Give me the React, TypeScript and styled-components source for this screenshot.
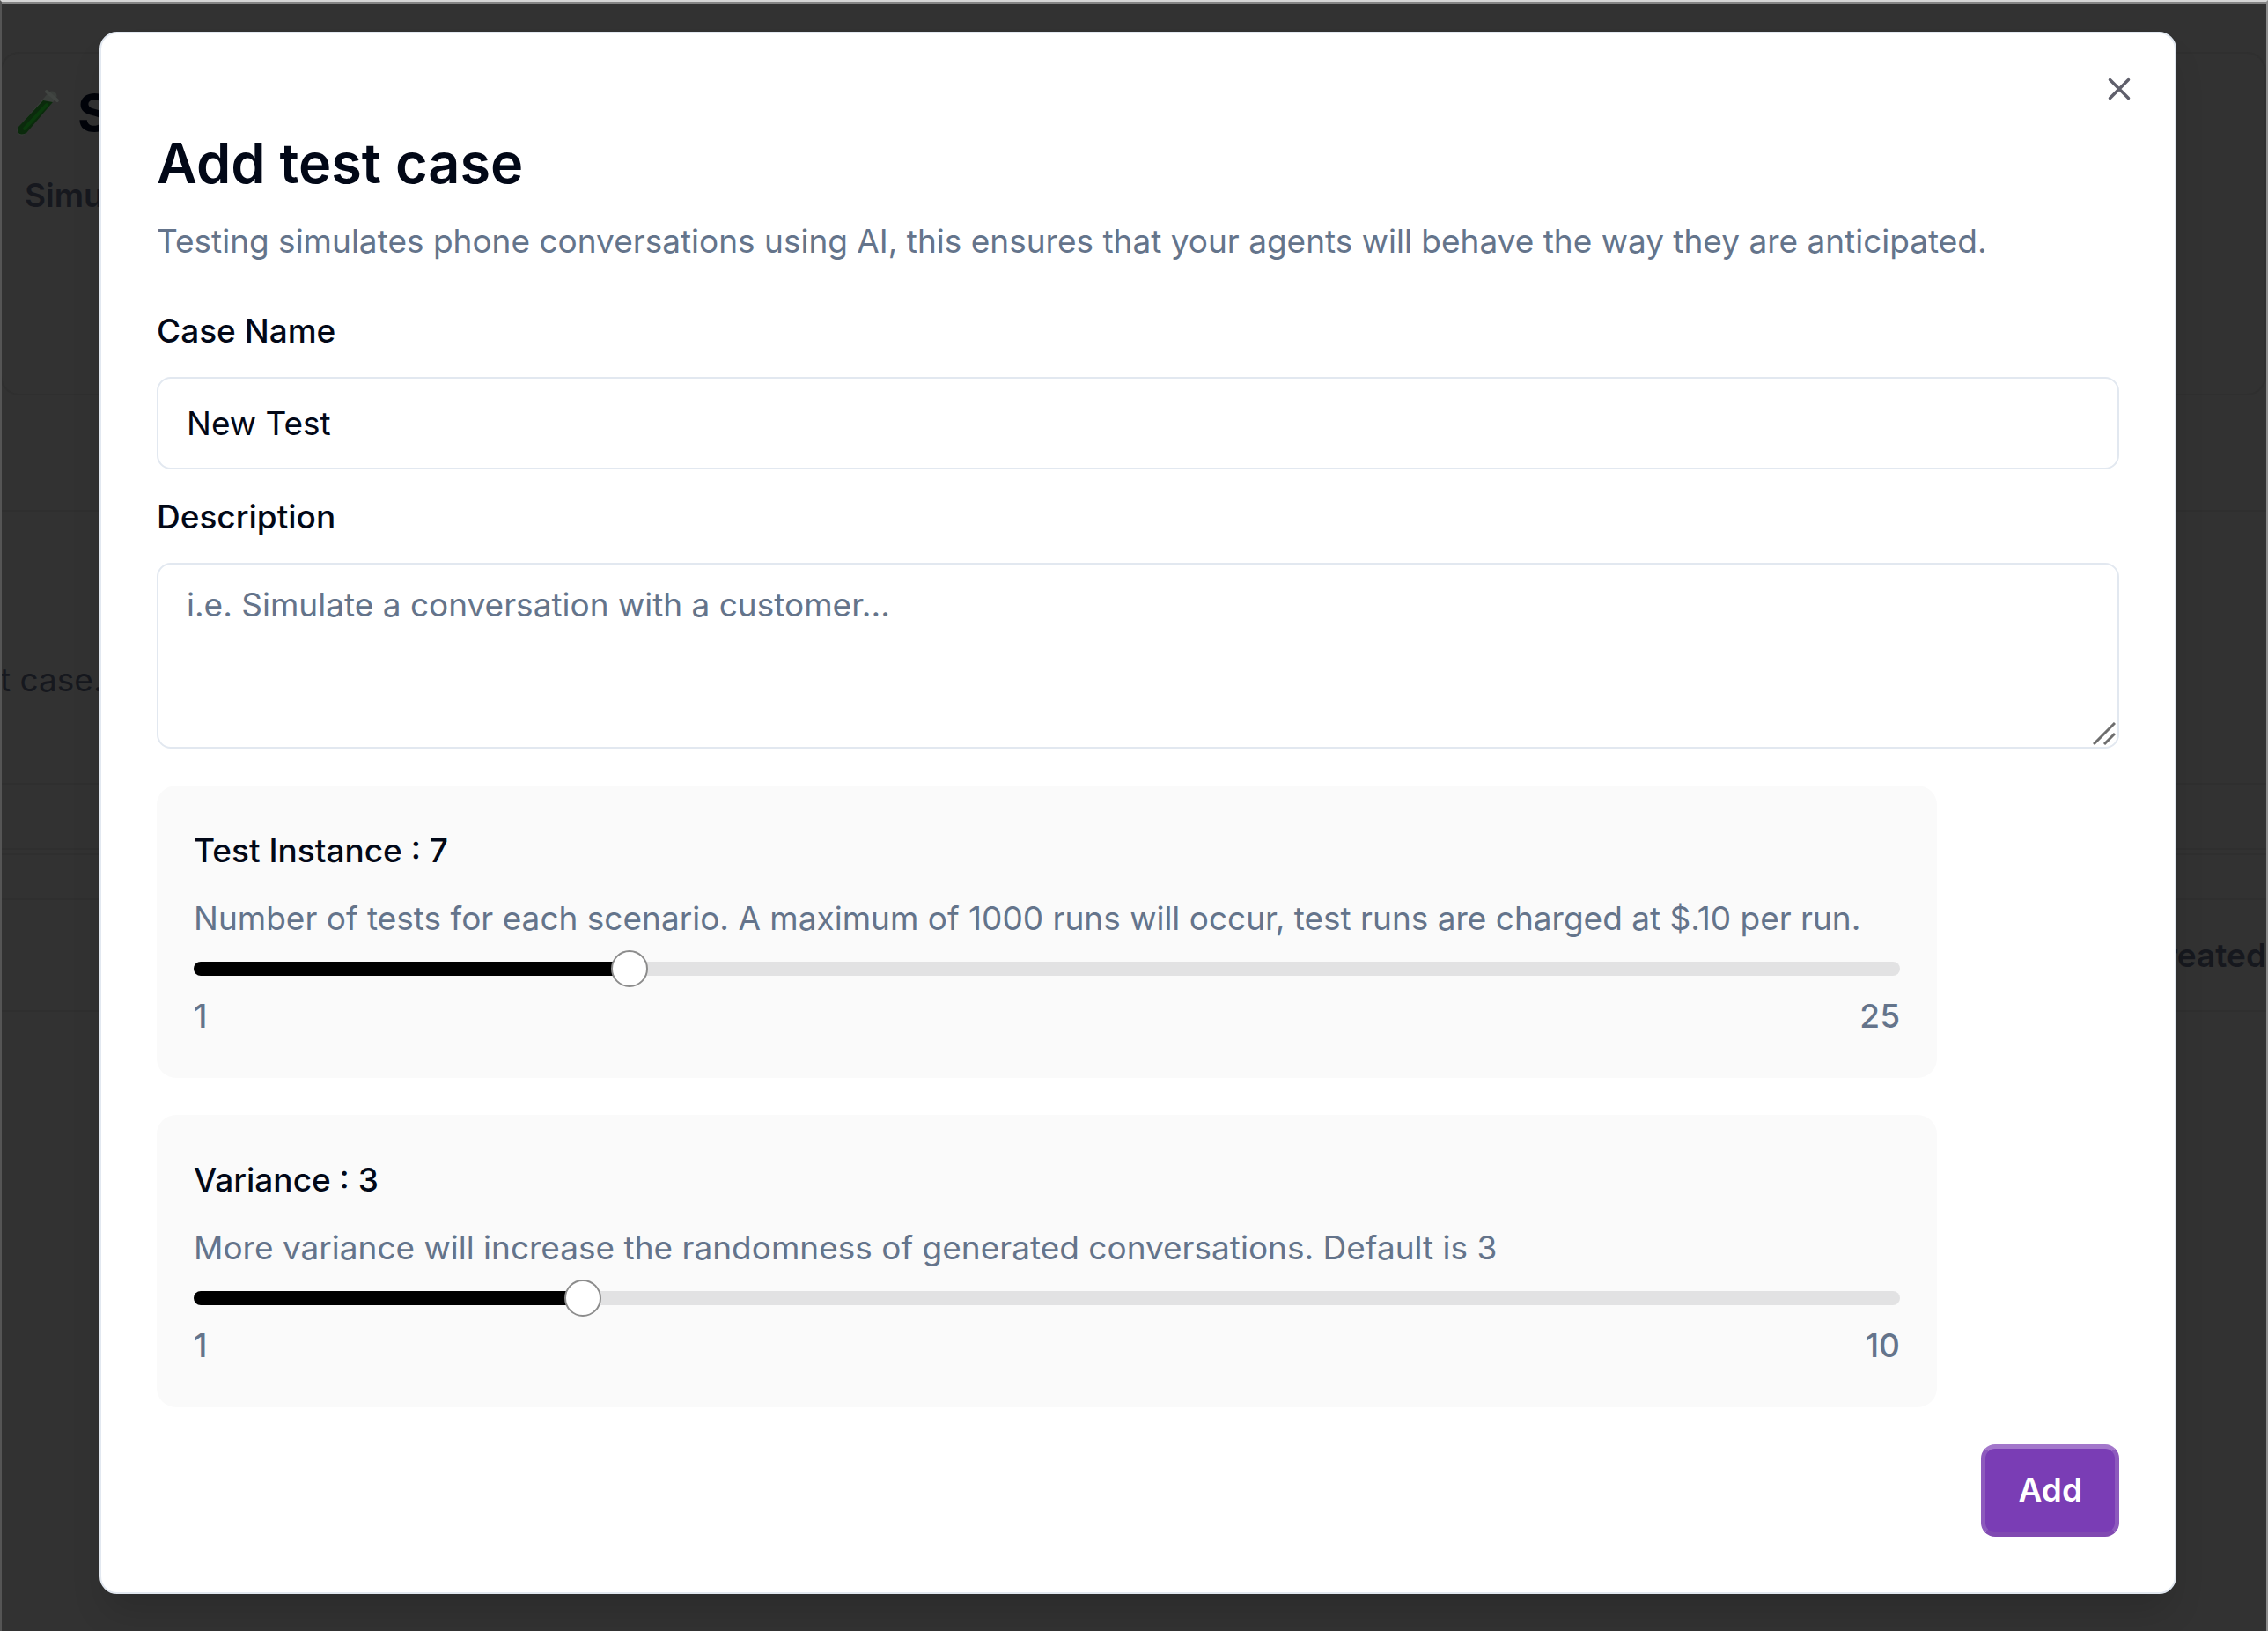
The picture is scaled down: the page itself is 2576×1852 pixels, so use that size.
import React, { useState } from "react";
import styled, { createGlobalStyle } from "styled-components";

const GlobalStyle = createGlobalStyle`
  *, *::before, *::after { box-sizing: border-box; }
  body {
    margin: 0;
    background: #323232;
    color: #020817;
    font-family: Inter, "Liberation Sans", sans-serif;
    font-size: 37px;
    line-height: 52px;
  }
  input, textarea, button { font: inherit; color: inherit; }
  h1, h2, p { margin: 0; }
`;

const Screen = styled.div`
  position: relative;
  min-height: 100vh;
  padding: 34px 102px 38px 111px;
  border-top: 2px solid #d6d6d6;
  border-left: 2px solid #555555;
  border-right: 2px solid #8c8c8c;
  overflow: hidden;
  background: #323232;
`;

const Backdrop = styled.div`
  position: absolute;
  inset: 0;
  border-top: 2px solid #848484;
  color: #16181e;
`;

const PageCard = styled.section`
  position: absolute;
  top: 55px;
  left: -2px;
  right: 0;
  height: 390px;
  padding: 40px 14px;
  border: 2px solid #2f2f2f;
  border-radius: 22px;
`;

const PageTitle = styled.h1`
  display: flex;
  align-items: center;
  gap: 18px;
  font-size: 58px;
  font-weight: 700;
  line-height: 54px;
  color: #02040a;
`;

const PageSubtitle = styled.p`
  padding: 41px 12px;
  font-weight: 600;
`;

const PageRow = styled.div<{ $top: number; $height: number; $end?: boolean }>`
  position: absolute;
  top: ${(p) => p.$top}px;
  left: -2px;
  right: 0;
  height: ${(p) => p.$height}px;
  display: flex;
  align-items: center;
  justify-content: ${(p) => (p.$end ? "flex-end" : "flex-start")};
  font-weight: ${(p) => (p.$end ? 600 : 400)};
  border-top: 2px solid #2f2f2f;
  border-bottom: 2px solid #2f2f2f;
`;

const Dialog = styled.form`
  position: relative;
  display: flex;
  flex-direction: column;
  padding: 111px 63px 63px;
  border: 2px solid #e2e8f0;
  border-radius: 20px;
  background: #ffffff;
  box-shadow: 0 26px 40px -8px rgba(0, 0, 0, 0.14);
`;

const CloseButton = styled.button`
  position: absolute;
  top: 42px;
  right: 42px;
  display: flex;
  padding: 0;
  border: 0;
  background: none;
  color: #5f5f6b;
`;

const Title = styled.h2`
  font-size: 63px;
  font-weight: 600;
  line-height: 72px;
`;

const Lead = styled.p`
  margin: 27px 0 50px;
  color: #64748b;
`;

const Label = styled.label`
  margin-bottom: 26px;
  font-weight: 500;
`;

const TextInput = styled.input`
  height: 105px;
  margin-bottom: 28px;
  padding: 0 32px;
  border: 2px solid #e2e8f0;
  border-radius: 16px;
  background: #ffffff;
`;

const TextArea = styled.textarea`
  display: block;
  height: 211px;
  margin-bottom: 42px;
  padding: 20px 32px;
  border: 2px solid #e2e8f0;
  border-radius: 16px;
  background: #ffffff;
  resize: none;
  &::placeholder { color: #64748b; opacity: 1; }
`;

const TextAreaWrap = styled.div`
  position: relative;
  display: grid;
`;

const Grip = styled.svg`
  position: absolute;
  right: 4px;
  bottom: 46px;
`;

const SliderCard = styled.section`
  display: flex;
  flex-direction: column;
  width: 100%;
  max-width: 2022px;
  margin-bottom: 42px;
  padding: 42px 42px 44px;
  border-radius: 22px;
  background: #fafafa;
`;

const SliderLabel = styled.label`
  margin-bottom: 19px;
  font-weight: 500;
  line-height: 64px;
`;

const SliderHint = styled.p`
  color: #64748b;
`;

const Slider = styled.input`
  --fill: 0%;
  appearance: none;
  width: 100%;
  height: 42px;
  margin: 10px 0 7px;
  background: none;
  &::-webkit-slider-runnable-track {
    height: 16px;
    border-radius: 8px;
    background: linear-gradient(to right, #000000 var(--fill), #e2e2e3 var(--fill));
  }
  &::-webkit-slider-thumb {
    appearance: none;
    width: 42px;
    height: 42px;
    margin-top: -13px;
    border: 2px solid #8c8c8c;
    border-radius: 50%;
    background: #ffffff;
  }
`;

const Bounds = styled.div`
  display: flex;
  justify-content: space-between;
  font-weight: 500;
  color: #64748b;
`;

const AddButton = styled.button`
  align-self: flex-end;
  height: 105px;
  padding: 0 37px 2px;
  border: 5px solid;
  border-color: #a377cb #8d5abd #8049b1;
  border-radius: 16px;
  background: #7a3db5;
  font-weight: 600;
  color: #ffffff;
`;

function TestTube() {
  return (
    <svg width="54" height="54" viewBox="0 0 54 54" aria-hidden="true">
      <path d="M9 47 L43 8" stroke="#3b3f3c" strokeWidth="11" strokeLinecap="round" />
      <path d="M37 3 L49 13" stroke="#414542" strokeWidth="4" strokeLinecap="round" />
      <path d="M5 43 L33 13 L44 15 L14 50 Q6 54 4 48 Z" fill="#0b2a0c" />
      <path d="M12 45 L37 18" stroke="#0a3a0c" strokeWidth="4" strokeLinecap="round" />
    </svg>
  );
}

function RangeField(props: { id: string; name: string; hint: string; max: number; initial: number }) {
  const [value, setValue] = useState(props.initial);
  const fill = ((value - 1) / (props.max - 1)) * 100;
  return (
    <SliderCard>
      <SliderLabel htmlFor={props.id}>
        {props.name} : {value}
      </SliderLabel>
      <SliderHint>{props.hint}</SliderHint>
      <Slider
        id={props.id}
        type="range"
        min={1}
        max={props.max}
        value={value}
        onChange={(e) => setValue(Number(e.target.value))}
        style={{ "--fill": `${fill}%` } as React.CSSProperties}
      />
      <Bounds>
        <span>1</span>
        <span>{props.max}</span>
      </Bounds>
    </SliderCard>
  );
}

export default function App() {
  return (
    <>
      <GlobalStyle />
      <Screen>
        <Backdrop aria-hidden="true">
          <PageCard>
            <PageTitle>
              <TestTube />S
            </PageTitle>
            <PageSubtitle>Simu</PageSubtitle>
          </PageCard>
          <PageRow $top={575} $height={386}>t case.</PageRow>
          <PageRow $top={885} $height={82} />
          <PageRow $top={1016} $height={129} $end>reated</PageRow>
        </Backdrop>
        <Dialog role="dialog" aria-labelledby="title" onSubmit={(e) => e.preventDefault()}>
          <CloseButton type="button" aria-label="Close">
            <svg width="42" height="42" viewBox="0 0 24 24" fill="none" stroke="currentColor" strokeWidth="2" strokeLinecap="round">
              <path d="M18 6 6 18M6 6l12 12" />
            </svg>
          </CloseButton>
          <Title id="title">Add test case</Title>
          <Lead>
            Testing simulates phone conversations using AI, this ensures that your agents will behave the way they are
            anticipated.
          </Lead>
          <Label htmlFor="case-name">Case Name</Label>
          <TextInput id="case-name" defaultValue="New Test" />
          <Label htmlFor="description">Description</Label>
          <TextAreaWrap>
            <TextArea id="description" placeholder="i.e. Simulate a conversation with a customer..." />
            <Grip width="26" height="26" viewBox="0 0 26 26" stroke="#6e6e6e" strokeWidth="3" aria-hidden="true">
              <path d="M1 25 25 1M13 25 25 13" />
            </Grip>
          </TextAreaWrap>
          <RangeField
            id="instances"
            name="Test Instance"
            hint="Number of tests for each scenario. A maximum of 1000 runs will occur, test runs are charged at $.10 per run."
            max={25}
            initial={7}
          />
          <RangeField
            id="variance"
            name="Variance"
            hint="More variance will increase the randomness of generated conversations. Default is 3"
            max={10}
            initial={3}
          />
          <AddButton type="submit">Add</AddButton>
        </Dialog>
      </Screen>
    </>
  );
}
